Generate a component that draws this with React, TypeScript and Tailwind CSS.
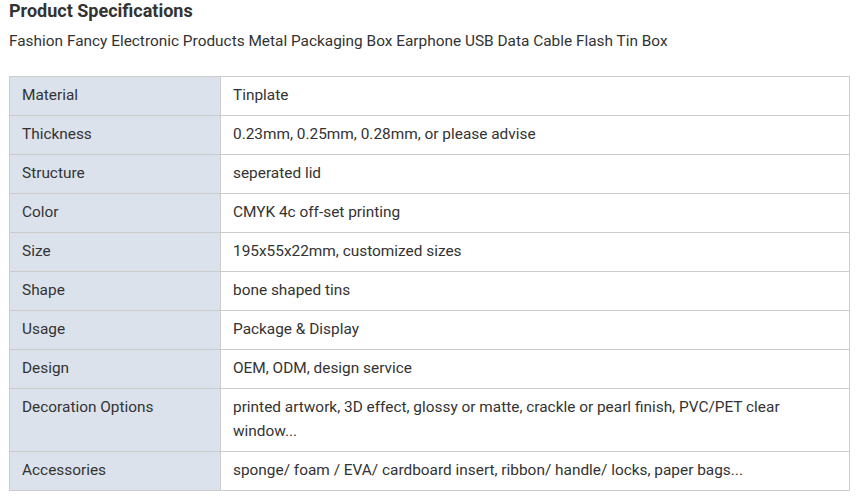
const specs: [string, string][] = [
  ['Material', 'Tinplate'],
  ['Thickness', '0.23mm, 0.25mm, 0.28mm, or please advise'],
  ['Structure', 'seperated lid'],
  ['Color', 'CMYK 4c off-set printing'],
  ['Size', '195x55x22mm, customized sizes'],
  ['Shape', 'bone shaped tins'],
  ['Usage', 'Package & Display'],
  ['Design', 'OEM, ODM, design service'],
  ['Decoration Options', 'printed artwork, 3D effect, glossy or matte, crackle or pearl finish, PVC/PET clear window...'],
  ['Accessories', 'sponge/ foam / EVA/ cardboard insert, ribbon/ handle/ locks, paper bags...'],
];

export default function App() {
  return (
    <div className="min-h-[498px] bg-white pl-[9px] pr-[11px] text-[#333333]" style={{ fontFamily: 'Roboto, "Noto Sans", sans-serif' }}>
      <h2 className="text-[18px] leading-[22px] font-bold">Product Specifications</h2>
      <p className="mt-[7px] text-[15.4px] leading-[24px]">
        Fashion Fancy Electronic Products Metal Packaging Box Earphone USB Data Cable Flash Tin Box
      </p>
      <table className="mt-[23px] w-full border-collapse text-[15.4px] leading-[24px]">
        <tbody>
          {specs.map(([label, value]) => (
            <tr key={label}>
              <td className="w-[211px] border border-[#cccccc] bg-[#dbe2ec] px-[12px] pt-[6px] pb-[8px] align-top">{label}</td>
              <td className="border border-[#cccccc] px-[12px] pt-[6px] pb-[8px] align-top">{value}</td>
            </tr>
          ))}
        </tbody>
      </table>
    </div>
  );
}
